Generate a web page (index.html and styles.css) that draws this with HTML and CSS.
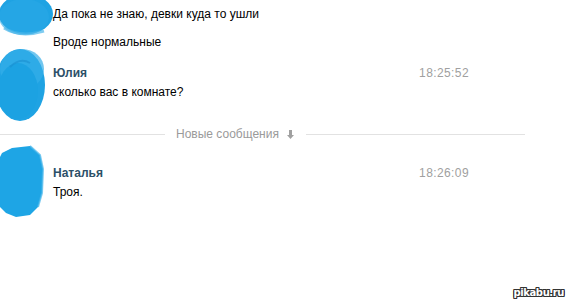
FILE: index.html
```html
<!DOCTYPE html>
<html>
<head>
<meta charset="utf-8">
<link rel="stylesheet" href="styles.css">
</head>
<body>
<div class="chat">
  <div class="group g1">
    <div class="ava">
      <svg width="56" height="40" viewBox="0 0 56 40">
        <ellipse cx="26" cy="14" rx="27" ry="20" fill="#1fa3e3"/>
        <ellipse cx="24" cy="17" rx="25" ry="18" fill="#29a9e6" opacity="0.6"/>
        <path d="M4 28 Q20 38 44 31" stroke="#4bb6ea" stroke-width="3" fill="none" opacity="0.7"/>
      </svg>
    </div>
    <div class="body">
      <div class="text">Да пока не знаю, девки куда то ушли</div>
      <div class="text second">Вроде нормальные</div>
    </div>
  </div>

  <div class="group g2">
    <div class="ava">
      <svg width="50" height="76" viewBox="0 0 50 76">
        <ellipse cx="20" cy="38" rx="25" ry="36" fill="#1fa3e3"/>
        <ellipse cx="22" cy="22" rx="22" ry="20" fill="#35aee8" opacity="0.7"/>
        <ellipse cx="18" cy="44" rx="20" ry="28" fill="#1ca2e2"/>
        <path d="M10 20 Q20 10 30 16" stroke="#1a8fd0" stroke-width="2" fill="none" opacity="0.6"/>
      </svg>
    </div>
    <div class="body">
      <div class="head"><span class="name">Юлия</span><span class="time">18:25:52</span></div>
      <div class="text">сколько вас в комнате?</div>
    </div>
  </div>

  <div class="divider">
    <div class="line left"></div>
    <span class="label">Новые сообщения</span>
    <svg class="arrow" width="7" height="9" viewBox="0 0 7 9"><path d="M2 0h3v5h2L3.5 9 0 5h2z" fill="#a0a0a0"/></svg>
    <div class="line right"></div>
  </div>

  <div class="group g3">
    <div class="ava">
      <svg width="46" height="74" viewBox="0 0 46 74">
        <path d="M12 3 L30 1 L40 10 L43 24 L42 48 L38 62 L30 70 L16 72 L6 68 L-2 60 L-4 20 L2 8 Z" fill="#1ea5e5"/>
        <path d="M30 1 L40 10 L43 24 L42 48 L38 62" stroke="#42b3ea" stroke-width="2" fill="none" opacity="0.7"/>
      </svg>
    </div>
    <div class="body">
      <div class="head"><span class="name">Наталья</span><span class="time">18:26:09</span></div>
      <div class="text">Троя.</div>
    </div>
  </div>
</div>
<div class="watermark">pikabu.ru</div>
</body>
</html>
```

FILE: styles.css
```css
html, body {
  margin: 0;
  padding: 0;
  background: #ffffff;
  width: 569px;
  height: 305px;
  overflow: hidden;
}
body {
  font-family: "Liberation Sans", Arial, sans-serif;
  font-size: 12px;
  color: #000;
  position: relative;
}
.chat {
  display: flex;
  flex-direction: column;
}
.group {
  display: flex;
  width: 470px;
}
.ava {
  width: 53px;
  flex: none;
  height: 18px;
}
.ava svg {
  display: block;
  overflow: visible;
}
.g1 {
  padding-top: 5px;
}
.g1 .ava svg {
  margin-top: -5px;
}
.g2 {
  margin-top: 13px;
}
.g2 .ava svg {
  margin-top: -17px;
}
.g3 .ava svg {
  margin-top: -19px;
}
.body {
  flex: 1;
  display: flex;
  flex-direction: column;
}
.text {
  line-height: 18px;
  height: 18px;
}
.second {
  margin-top: 10px;
}
.head {
  display: flex;
  justify-content: space-between;
  line-height: 18px;
  height: 18px;
  margin-bottom: 1px;
}
.name {
  font-weight: bold;
  color: #2d5068;
}
.time {
  color: #a0a0a0;
  font-size: 12px;
  letter-spacing: 0.4px;
  margin-right: 1px;
}
.divider {
  display: flex;
  align-items: center;
  width: 525px;
  height: 20px;
  margin-top: 23px;
  margin-bottom: 20px;
}
.line {
  height: 1px;
  background: #e2e2e2;
}
.line.left {
  width: 165px;
  margin-right: 11px;
}
.line.right {
  flex: 1;
  margin-left: 12px;
}
.label {
  color: #9a9a9a;
  font-size: 12px;
}
.arrow {
  margin-left: 8px;
  display: block;
}
.watermark {
  position: absolute;
  right: 5px;
  bottom: 7px;
  font-family: "DejaVu Sans", sans-serif;
  font-weight: bold;
  font-size: 10px;
  color: #fff;
  letter-spacing: -0.4px;
  text-shadow: 1px 0 0 #333, -1px 0 0 #333, 0 1px 0 #333, 0 -1px 0 #333, 1px 1px 0 #333, -1px -1px 0 #333, 1px -1px 0 #333, -1px 1px 0 #333;
}
```
